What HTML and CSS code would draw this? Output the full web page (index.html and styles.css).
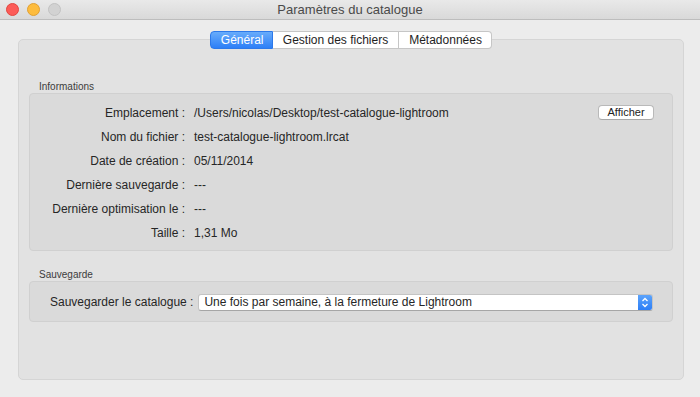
FILE: index.html
```
<!DOCTYPE html>
<html lang="fr">
<head>
    <meta charset="UTF-8">
    <title>Paramètres du catalogue</title>
    <link rel="stylesheet" href="styles.css">
</head>
<body>
    <div class="window">
        <div class="titlebar">
            <div class="lights">
                <span class="light close"></span>
                <span class="light minimize"></span>
                <span class="light zoom"></span>
            </div>
            <div class="title">Paramètres du catalogue</div>
        </div>

        <div class="content">
            <div class="tabs">
                <span class="tab active">Général</span>
                <span class="tab">Gestion des fichiers</span>
                <span class="tab">Métadonnées</span>
            </div>

            <div class="pane">
                <div class="group-title">Informations</div>
                <div class="group info">
                    <div class="row">
                        <span class="label">Emplacement :</span>
                        <span class="value">/Users/nicolas/Desktop/test-catalogue-lightroom</span>
                        <button class="btn">Afficher</button>
                    </div>
                    <div class="row">
                        <span class="label">Nom du fichier :</span>
                        <span class="value">test-catalogue-lightroom.lrcat</span>
                    </div>
                    <div class="row">
                        <span class="label">Date de création :</span>
                        <span class="value">05/11/2014</span>
                    </div>
                    <div class="row">
                        <span class="label">Dernière sauvegarde :</span>
                        <span class="value">---</span>
                    </div>
                    <div class="row">
                        <span class="label">Dernière optimisation le :</span>
                        <span class="value">---</span>
                    </div>
                    <div class="row">
                        <span class="label">Taille :</span>
                        <span class="value">1,31 Mo</span>
                    </div>
                </div>

                <div class="group-title backup-title">Sauvegarde</div>
                <div class="group backup">
                    <span class="backup-label">Sauvegarder le catalogue :</span>
                    <div class="select">
                        <span class="select-text">Une fois par semaine, à la fermeture de Lightroom</span>
                        <span class="select-arrows">
                            <svg width="14" height="17" viewBox="0 0 14 17">
                                <path d="M4.5 7 L7 4.5 L9.5 7" fill="none" stroke="#fff" stroke-width="1.3"/>
                                <path d="M4.5 10 L7 12.5 L9.5 10" fill="none" stroke="#fff" stroke-width="1.3"/>
                            </svg>
                        </span>
                    </div>
                </div>
            </div>
        </div>
    </div>
</body>
</html>
```

FILE: styles.css
```
body {
    margin: 0;
    font-family: "Liberation Sans", Arial, sans-serif;
    font-size: 12px;
    color: #262626;
    background-color: #ececec;
}
.window {
    width: 700px;
    height: 397px;
    background-color: #ececec;
}
.titlebar {
    height: 19px;
    border-bottom: 1px solid #bdbdbd;
    background: linear-gradient(#e9e9e9, #d9d9d9);
    display: flex;
    align-items: center;
    position: relative;
}
.lights {
    display: flex;
    gap: 8px;
    padding-left: 6px;
    position: relative;
    z-index: 1;
}
.light {
    width: 11px;
    height: 11px;
    border-radius: 50%;
    margin-top: -1px;
}
.light.close {
    background-color: #fc5b57;
    border: 0.5px solid #e2463f;
}
.light.minimize {
    background-color: #fdbc3e;
    border: 0.5px solid #e1a032;
}
.light.zoom {
    background-color: #d2d2d2;
    border: 0.5px solid #c2c2c2;
}
.title {
    position: absolute;
    left: 0;
    right: 0;
    text-align: center;
    font-size: 13px;
    color: #4a4a4a;
    line-height: 19px;
}
.content {
    padding: 0 16px 0 18px;
}
.tabs {
    display: flex;
    justify-content: center;
    margin-top: 11px;
    position: relative;
    z-index: 1;
}
.tab {
    height: 16px;
    line-height: 16px;
    padding: 0 10px;
    background-color: #ffffff;
    border: 1px solid #c6c6c6;
    border-left: none;
    color: #1e1e1e;
    font-size: 12px;
}
.tab:first-child {
    border-radius: 4px 0 0 4px;
    border-left: 1px solid #c6c6c6;
}
.tab:last-child {
    border-radius: 0 4px 4px 0;
    width: 72px;
    text-align: center;
}
.tab.active {
    background: linear-gradient(#68acfb, #2d7ff7);
    border-color: #2c79ea;
    color: #ffffff;
    width: 41px;
    text-align: center;
}
.pane {
    margin-top: -10px;
    height: 339px;
    border: 1px solid #d5d5d5;
    border-radius: 5px;
    background-color: #e2e2e2;
    padding: 0 10px;
}
.group-title {
    font-size: 10px;
    color: #3c3c3c;
    padding-left: 10px;
    margin-top: 41px;
    height: 12px;
    line-height: 12px;
}
.group {
    border: 1px solid #d0d0d0;
    border-radius: 4px;
    background-color: #dadada;
}
.info {
    padding: 7px 0 5px;
}
.row {
    display: flex;
    align-items: center;
    height: 24px;
}
.label {
    width: 155px;
    text-align: right;
    flex-shrink: 0;
}
.value {
    margin-left: 9px;
    flex: 1;
}
.btn {
    font-family: inherit;
    font-size: 11px;
    color: #222;
    width: 56px;
    height: 15px;
    padding: 0;
    line-height: 13px;
    background-color: #ffffff;
    border: 1px solid #b9b9b9;
    border-bottom-color: #a9a9a9;
    border-radius: 4px;
    margin-right: 18px;
    margin-top: -2px;
}
.backup-title {
    margin-top: 18px;
}
.backup {
    display: flex;
    align-items: center;
    height: 39px;
    padding: 0 19px 0 20px;
}
.backup-label {
    margin-right: 5px;
}
.select {
    flex: 1;
    display: flex;
    height: 15px;
    background-color: #ffffff;
    border: 1px solid #c4c4c4;
    border-bottom-color: #a6a6a6;
    border-radius: 3px;
    overflow: hidden;
    margin-top: 1px;
}
.select-text {
    flex: 1;
    padding-left: 5px;
    line-height: 15px;
}
.select-arrows {
    width: 14px;
    height: 17px;
    margin-top: -1px;
    background: linear-gradient(#5fa6fb, #2a7cf6);
}
.select-arrows svg {
    display: block;
}
```
